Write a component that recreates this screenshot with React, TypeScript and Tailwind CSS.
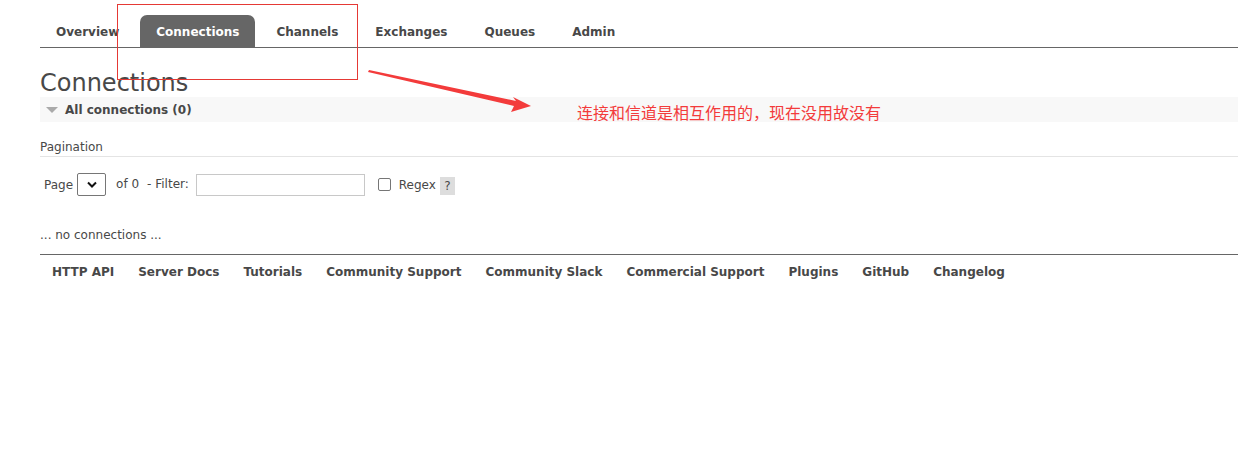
import React from 'react';

const tabs = ['Overview', 'Connections', 'Channels', 'Exchanges', 'Queues', 'Admin'];
const footerLinks = [
  'HTTP API',
  'Server Docs',
  'Tutorials',
  'Community Support',
  'Community Slack',
  'Commercial Support',
  'Plugins',
  'GitHub',
  'Changelog',
];

function Annotation() {
  return (
    <>
      <div className="absolute left-[117px] top-[4px] w-[241px] h-[76px] border border-[#e53935]" />
      <svg className="absolute left-0 top-0 pointer-events-none" width="1238" height="458">
        <polygon points="369,70 516,101 513,97 531,106 511,112 514,106 368,72" fill="#f33b3b" />
      </svg>
      <div className="absolute left-[577px] top-[102px] text-[16px] leading-[20px] text-[#f33b3b] font-['Microsoft_YaHei','Noto_Sans_CJK_SC',sans-serif]">
        连接和信道是相互作用的，现在没用故没有
      </div>
    </>
  );
}

export default function App() {
  return (
    <div className="relative w-[1238px] h-[458px] bg-white font-['DejaVu_Sans',Verdana,sans-serif] text-[12px] text-[#484848] overflow-hidden">
      <div className="pl-[40px]">
        <ul className="flex items-end pt-[15px] border-b border-[#666] gap-[5px]">
          {tabs.map((t) => (
            <li
              key={t}
              className={
                t === 'Connections'
                  ? 'h-[32px] pt-[2px] px-[16px] flex items-center rounded-t-[7px] bg-[#666] text-white font-bold text-[12px]'
                  : 'h-[32px] pt-[2px] px-[16px] flex items-center font-bold text-[12px] text-[#484848]'
              }
            >
              {t}
            </li>
          ))}
        </ul>

        <h1 className="mt-[21px] text-[24px] leading-[28px] text-[#484848]">Connections</h1>

        <div className="h-[25px] bg-[#f8f8f8] flex items-center pl-[6px]">
          <span className="w-0 h-0 border-l-[6px] border-r-[6px] border-t-[6px] border-l-transparent border-r-transparent border-t-[#aaa] mr-[7px]" />
          <span className="font-bold text-[12px] text-[#484848]">All connections (0)</span>
        </div>

        <div className="mt-[18px] pb-[1px] border-b border-[#e4e4e4] text-[12px] leading-[15px]">Pagination</div>

        <div className="mt-[16px] flex items-center pl-[4px] h-[23px]">
          <span>Page</span>
          <div className="ml-[4px] w-[29px] h-[23px] border border-[#767676] rounded-[2px] flex items-center justify-center">
            <svg width="10" height="7" viewBox="0 0 10 7">
              <path d="M1 1.5 L5 5.5 L9 1.5" fill="none" stroke="#111" strokeWidth="2" />
            </svg>
          </div>
          <span className="ml-[10px] -mt-[1px]">of 0</span>
          <span className="ml-[8px] -mt-[1px]">- Filter:</span>
          <div className="ml-[7px] w-[169px] h-[22px] border border-[#c8c8c8]" />
          <div className="ml-[13px] w-[13px] h-[13px] border border-[#767676] rounded-[2px]" />
          <span className="ml-[8px] mt-[1px]">Regex</span>
          <span className="ml-[4px] mt-[3px] w-[15px] h-[18px] bg-[#ddd] flex items-center justify-center">?</span>
        </div>

        <div className="mt-[32px] leading-[15px]">... no connections ...</div>

        <div className="mt-[11px] border-t border-[#666] flex pt-[8px] pl-[12px] gap-[24px] font-bold text-[12px]">
          {footerLinks.map((l) => (
            <span key={l}>{l}</span>
          ))}
        </div>
      </div>
      <Annotation />
    </div>
  );
}
